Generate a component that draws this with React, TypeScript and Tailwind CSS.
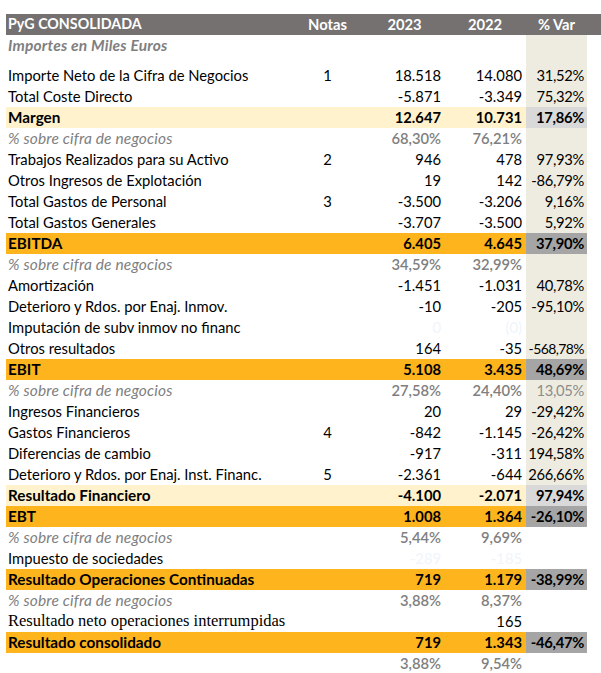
type Kind = 'normal' | 'pct' | 'light' | 'orange';

type Row = {
  label: string;
  kind: Kind;
  nota?: string;
  y23?: string;
  y22?: string;
  pv?: string;
  ghost?: boolean;
  serif?: boolean;
  beige: boolean;
  pvMuted?: boolean;
};

const rows: Row[] = [
  { label: 'Importe Neto de la Cifra de Negocios', kind: 'normal', nota: '1', y23: '18.518', y22: '14.080', pv: '31,52%', beige: true },
  { label: 'Total Coste Directo', kind: 'normal', y23: '-5.871', y22: '-3.349', pv: '75,32%', beige: true },
  { label: 'Margen', kind: 'light', y23: '12.647', y22: '10.731', pv: '17,86%', beige: true },
  { label: '% sobre cifra de negocios', kind: 'pct', y23: '68,30%', y22: '76,21%', beige: true },
  { label: 'Trabajos Realizados para su Activo', kind: 'normal', nota: '2', y23: '946', y22: '478', pv: '97,93%', beige: true },
  { label: 'Otros Ingresos de Explotación', kind: 'normal', y23: '19', y22: '142', pv: '-86,79%', beige: true },
  { label: 'Total Gastos de Personal', kind: 'normal', nota: '3', y23: '-3.500', y22: '-3.206', pv: '9,16%', beige: true },
  { label: 'Total Gastos Generales', kind: 'normal', y23: '-3.707', y22: '-3.500', pv: '5,92%', beige: true },
  { label: 'EBITDA', kind: 'orange', y23: '6.405', y22: '4.645', pv: '37,90%', beige: true },
  { label: '% sobre cifra de negocios', kind: 'pct', y23: '34,59%', y22: '32,99%', beige: true },
  { label: 'Amortización', kind: 'normal', y23: '-1.451', y22: '-1.031', pv: '40,78%', beige: true },
  { label: 'Deterioro y Rdos. por Enaj. Inmov.', kind: 'normal', y23: '-10', y22: '-205', pv: '-95,10%', beige: true },
  { label: 'Imputación de subv inmov no financ', kind: 'normal', y23: '0', y22: '(0)', ghost: true, beige: true },
  { label: 'Otros resultados', kind: 'normal', y23: '164', y22: '-35', pv: '-568,78%', beige: true },
  { label: 'EBIT', kind: 'orange', y23: '5.108', y22: '3.435', pv: '48,69%', beige: true },
  { label: '% sobre cifra de negocios', kind: 'pct', y23: '27,58%', y22: '24,40%', pv: '13,05%', pvMuted: true, beige: true },
  { label: 'Ingresos Financieros', kind: 'normal', y23: '20', y22: '29', pv: '-29,42%', beige: true },
  { label: 'Gastos Financieros', kind: 'normal', nota: '4', y23: '-842', y22: '-1.145', pv: '-26,42%', beige: true },
  { label: 'Diferencias de cambio', kind: 'normal', y23: '-917', y22: '-311', pv: '194,58%', beige: true },
  { label: 'Deterioro y Rdos. por Enaj. Inst. Financ.', kind: 'normal', nota: '5', y23: '-2.361', y22: '-644', pv: '266,66%', beige: true },
  { label: 'Resultado Financiero', kind: 'light', y23: '-4.100', y22: '-2.071', pv: '97,94%', beige: true },
  { label: 'EBT', kind: 'orange', y23: '1.008', y22: '1.364', pv: '-26,10%', beige: true },
  { label: '% sobre cifra de negocios', kind: 'pct', y23: '5,44%', y22: '9,69%', beige: false },
  { label: 'Impuesto de sociedades', kind: 'normal', y23: '-289', y22: '-185', ghost: true, beige: false },
  { label: 'Resultado Operaciones Continuadas', kind: 'orange', y23: '719', y22: '1.179', pv: '-38,99%', beige: false },
  { label: '% sobre cifra de negocios', kind: 'pct', y23: '3,88%', y22: '8,37%', beige: false },
  { label: 'Resultado neto operaciones interrumpidas', kind: 'normal', y22: '165', serif: true, beige: false },
  { label: 'Resultado consolidado', kind: 'orange', y23: '719', y22: '1.343', pv: '-46,47%', beige: false },
  { label: '', kind: 'pct', y23: '3,88%', y22: '9,54%', beige: false },
];

function rowBg(kind: Kind) {
  if (kind === 'orange') return 'bg-[#fdb41d]';
  if (kind === 'light') return 'bg-[#fff2cc]';
  return '';
}

function varBg(r: Row) {
  if (r.kind === 'orange') return 'bg-[#a5a5a5]';
  if (r.kind === 'light') return 'bg-[#d9d9d9]';
  return r.beige ? 'bg-[#eeece1]' : '';
}

function TableRow({ r }: { r: Row }) {
  const bold = r.kind === 'orange' || r.kind === 'light';
  const numText = r.ghost
    ? 'text-[#f0f5fb]'
    : r.kind === 'pct'
      ? 'text-[#7f7f7f] font-semibold'
      : bold
        ? 'text-black font-bold'
        : 'text-black';

  let labelText = 'text-black';
  if (r.kind === 'pct') labelText = 'italic text-[#808080] text-[15.5px] tracking-[0.15px]';
  else if (bold) labelText = 'font-bold text-black text-[15.3px]';
  else if (r.serif) labelText = "text-black font-['Liberation_Serif',serif] text-[16.5px]";

  const long = (r.pv ?? '').length > 7;

  return (
    <div className="flex h-[21px] items-center leading-none">
      <div className={`flex h-full w-[284px] items-center whitespace-nowrap pl-[2px] ${rowBg(r.kind)} ${labelText}`}>
        {r.label}
      </div>
      <div className={`flex h-full w-[75px] items-center justify-center ${rowBg(r.kind)}`}>{r.nota}</div>
      <div className={`flex h-full w-[79px] items-center justify-end pr-[3px] ${rowBg(r.kind)} ${numText}`}>
        {r.y23}
      </div>
      <div className={`flex h-full w-[82px] items-center justify-end pr-[4px] ${rowBg(r.kind)} ${numText}`}>
        {r.y22}
      </div>
      <div
        className={`flex h-full w-[61px] items-center justify-end whitespace-nowrap pr-[3px] ${
          long ? 'text-[14px] tracking-[-0.6px]' : 'tracking-[-0.3px]'
        } ${varBg(r)} ${r.pvMuted ? 'text-[#8c8c8c]' : bold ? 'font-bold text-black' : 'text-black'}`}
      >
        {r.pv}
      </div>
    </div>
  );
}

export default function App() {
  return (
    <div className="min-h-[673px] w-[601px] bg-white pl-[6px] pt-[14px] font-['Lato',sans-serif] text-[14.75px]">
      {/* Header */}
      <div className="flex h-[21px] items-center bg-[#757171] font-bold text-white leading-none">
        <div className="w-[284px] pl-[2px] text-[14.25px]">PyG CONSOLIDADA</div>
        <div className="w-[75px] text-center">Notas</div>
        <div className="w-[79px] text-center">2023</div>
        <div className="w-[82px] text-center">2022</div>
        <div className="w-[61px] text-center">% Var</div>
      </div>

      <div className="flex h-[21px] items-center leading-none">
        <div className="w-[520px] pl-[2px] text-[15.5px] font-bold italic tracking-[0.2px] text-[#7f7f7f]">
          Importes en Miles Euros
        </div>
        <div className="h-full w-[61px] bg-[#eeece1]" />
      </div>
      <div className="flex h-[9px]">
        <div className="w-[520px]" />
        <div className="h-full w-[61px] bg-[#eeece1]" />
      </div>

      {rows.map((r, i) => (
        <TableRow key={i} r={r} />
      ))}
    </div>
  );
}
